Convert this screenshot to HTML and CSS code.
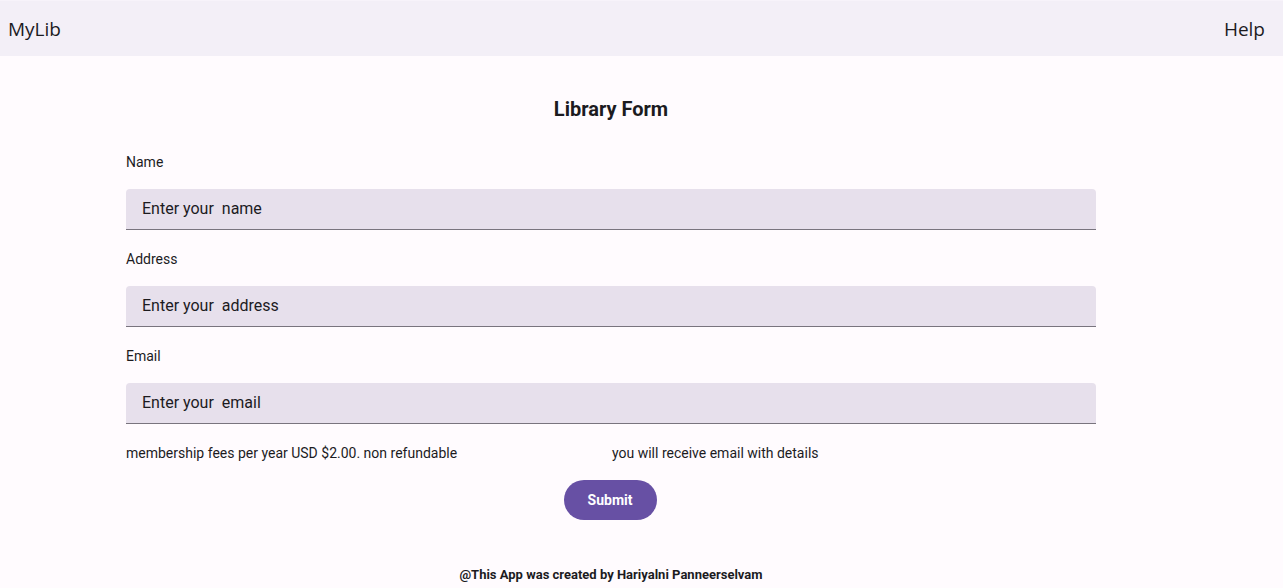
FILE: index.html
```html
<!DOCTYPE html>
<html lang="en">
<head>
<meta charset="utf-8">
<title>MyLib</title>
<link rel="stylesheet" href="styles.css">
</head>
<body>
<header class="topbar">
  <div class="brand">MyLib</div>
  <div class="help">Help</div>
</header>
<main class="form">
  <h1 class="title">Library Form</h1>
  <div class="label">Name</div>
  <div class="field">Enter your&nbsp; name</div>
  <div class="label">Address</div>
  <div class="field">Enter your&nbsp; address</div>
  <div class="label">Email</div>
  <div class="field">Enter your&nbsp; email</div>
  <div class="info">
    <span class="info-left">membership fees per year USD $2.00. non refundable</span>
    <span>you will receive email with details</span>
  </div>
  <div class="actions"><button class="submit" type="button">Submit</button></div>
  <footer class="footer">@This App was created by Hariyalni Panneerselvam</footer>
</main>
</body>
</html>
```
FILE: styles.css
```css
html, body {
  margin: 0;
  padding: 0;
  background: #fffbfe;
  color: #1c1b1f;
  font-family: Roboto, "Noto Sans", sans-serif;
}
.topbar {
  height: 56px;
  background: #f3eff7;
  border-top: 1px solid #f7f3fa;
  box-sizing: border-box;
  display: flex;
  align-items: center;
  justify-content: space-between;
  padding: 0 18px 0 8px;
  font-family: "Open Sans", "Noto Sans", sans-serif;
  font-size: 19px;
  color: #1c1b1f;
}
.form {
  width: 970px;
  margin-left: 126px;
  display: flex;
  flex-direction: column;
}
.title {
  margin: 41px 0 0;
  font-size: 20px;
  line-height: 24px;
  font-weight: 700;
  text-align: center;
}
.label {
  font-size: 14px;
  line-height: 20px;
  margin-top: 31px;
}
.field + .label { margin-top: 19px; }
.field {
  margin-top: 17px;
  height: 40px;
  background: #e7e0ec;
  border-bottom: 1px solid #79747e;
  border-radius: 4px 4px 0 0;
  padding: 0 16px 2px;
  box-sizing: content-box;
  height: 38px;
  display: flex;
  align-items: center;
  font-size: 16px;
  white-space: pre;
}
.info {
  margin-top: 19px;
  font-size: 14px;
  line-height: 20px;
  display: flex;
}
.info-left { width: 486px; }
.actions {
  margin-top: 17px;
  display: flex;
  justify-content: center;
  padding-right: 2px;
}
.submit {
  width: 93px;
  height: 40px;
  border: none;
  border-radius: 20px;
  background: #6750a4;
  color: #ffffff;
  font-family: Roboto, sans-serif;
  font-size: 14px;
  font-weight: 700;
  padding: 0;
}
.footer {
  margin-top: 47px;
  text-align: center;
  font-size: 13px;
  line-height: 16px;
  font-weight: 700;
}
```
